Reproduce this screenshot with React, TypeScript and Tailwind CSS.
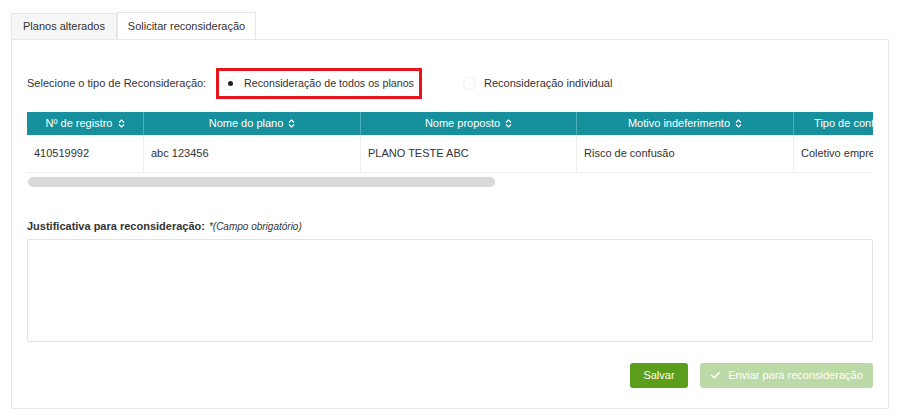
import { Check } from "lucide-react";

const cols = [
  { label: "Nº de registro", w: 116, value: "410519992" },
  { label: "Nome do plano", w: 217, value: "abc 123456" },
  { label: "Nome proposto", w: 216, value: "PLANO TESTE ABC" },
  { label: "Motivo indeferimento", w: 217, value: "Risco de confusão" },
  { label: "Tipo de contratação", w: 150, value: "Coletivo empresarial" },
];

function SortIcon() {
  return (
    <svg width="7" height="9" viewBox="0 0 7 9" className="inline-block ml-[5px] -mt-[1px]">
      <path d="M1 3.5 L3.5 1 L6 3.5" fill="none" stroke="currentColor" strokeWidth="1.2" />
      <path d="M1 5.5 L3.5 8 L6 5.5" fill="none" stroke="currentColor" strokeWidth="1.2" />
    </svg>
  );
}

export default function App() {
  return (
    <div
      className="w-[900px] h-[419px] bg-white px-[11px] pt-[12px] text-[#333] text-[11px]"
      style={{ fontFamily: '"Liberation Sans", Arial, sans-serif' }}
    >
      <div className="flex h-[27px]">
        <div className="w-[106px] h-[26px] mt-px flex items-center justify-center bg-[#f6f6f6] border border-[#e6e6e6] border-b-0">
          Planos alterados
        </div>
        <div className="w-[139px] h-[27px] flex items-center justify-center bg-white border border-[#e6e6e6] border-b-0 relative z-10 -mb-px">
          Solicitar reconsideração
        </div>
      </div>

      <div className="h-[370px] border border-[#e8e8e8] px-[15px] pt-[28px]">
        <div className="flex items-center h-[31px] whitespace-nowrap">
          <span className="w-[189px]">Selecione o tipo de Reconsideração:</span>
          <div className="w-[206px] h-[31px] border-[3px] border-[#e8141c] flex items-center pl-[5px]">
            <span className="shrink-0 w-[12px] h-[12px] rounded-full bg-white flex items-center justify-center shadow-[0_0_2px_rgba(0,0,0,0.15)]">
              <span className="w-[5px] h-[5px] rounded-full bg-[#222]" />
            </span>
            <span className="ml-[8px] text-[10.7px]">Reconsideração de todos os planos</span>
          </div>
          <div className="flex items-center ml-[41px]">
            <span className="w-[13px] h-[13px] rounded-full border border-[#ececec]" />
            <span className="ml-[8px]">Reconsideração individual</span>
          </div>
        </div>

        <div className="mt-[13px] w-[846px] overflow-hidden">
          <div className="flex w-max">
            {cols.map((c, i) => (
              <div key={c.label} style={{ width: c.w }} className="shrink-0">
                <div
                  className={
                    "h-[23px] bg-[#17909d] text-white flex items-center justify-center whitespace-nowrap" +
                    (i > 0 ? " border-l border-[#4fb0ba]" : "")
                  }
                >
                  {c.label}
                  <SortIcon />
                </div>
                <div
                  className={
                    "h-[38px] flex items-center px-[7px] whitespace-nowrap border-b border-[#eeeeee]" +
                    (i > 0 ? " border-l border-[#eeeeee]" : "")
                  }
                >
                  {c.value}
                </div>
              </div>
            ))}
          </div>
        </div>
        <div className="mt-[4px] ml-px w-[467px] h-[10px] rounded-full bg-[#d9d9d9]" />

        <div className="mt-[32px] h-[14px] flex items-center">
          <span className="font-bold">Justificativa para reconsideração:</span>
          <span className="italic ml-[4px] text-[10px]">*(Campo obrigatório)</span>
        </div>
        <div className="mt-[6px] w-[846px] h-[103px] border border-[#e3e3e3] rounded-[2px]" />

        <div className="mt-[21px] w-[846px] flex justify-end gap-[12px]">
          <button className="w-[58px] h-[25px] rounded-[3px] bg-[#5b9e1c] text-white text-[11px]">
            Salvar
          </button>
          <button className="w-[173px] h-[25px] rounded-[3px] bg-[#bcd9a8] text-white text-[11px] flex items-center justify-center gap-[7px]">
            <Check size={11} strokeWidth={3.5} />
            Enviar para reconsideração
          </button>
        </div>
      </div>
    </div>
  );
}
